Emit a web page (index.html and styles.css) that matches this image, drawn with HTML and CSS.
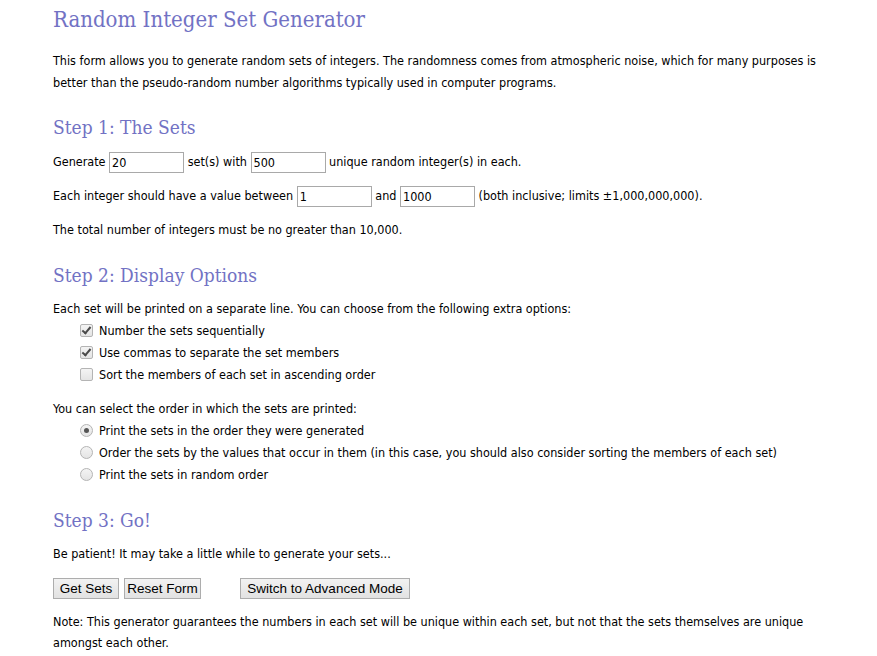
FILE: index.html
```html
<!DOCTYPE html>
<html>
<head>
<meta charset="utf-8">
<link rel="stylesheet" href="styles.css">
</head>
<body>
<div class="page">
<h1>Random Integer Set Generator</h1>
<p class="intro">This form allows you to generate random sets of integers. The randomness comes from atmospheric noise, which for many purposes is better than the pseudo-random number algorithms typically used in computer programs.</p>

<h2 class="h-step1">Step 1: The Sets</h2>
<p class="row">Generate <input class="num" type="text" value="20"> set(s) with <input class="num" type="text" value="500"> unique random integer(s) in each.</p>
<p class="row">Each integer should have a value between <input class="num" type="text" value="1"> and <input class="num" type="text" value="1000"> (both inclusive; limits ±1,000,000,000).</p>
<p class="row plain">The total number of integers must be no greater than 10,000.</p>

<h2 class="h-step2">Step 2: Display Options</h2>
<p class="lead">Each set will be printed on a separate line. You can choose from the following extra options:</p>
<div class="opts">
  <label class="opt"><input class="cb" type="checkbox" checked><span>Number the sets sequentially</span></label>
  <label class="opt"><input class="cb" type="checkbox" checked><span>Use commas to separate the set members</span></label>
  <label class="opt"><input class="cb" type="checkbox"><span>Sort the members of each set in ascending order</span></label>
</div>
<p class="lead second">You can select the order in which the sets are printed:</p>
<div class="opts">
  <label class="opt"><input class="rb" type="radio" name="order" checked><span>Print the sets in the order they were generated</span></label>
  <label class="opt"><input class="rb" type="radio" name="order"><span>Order the sets by the values that occur in them (in this case, you should also consider sorting the members of each set)</span></label>
  <label class="opt"><input class="rb" type="radio" name="order"><span>Print the sets in random order</span></label>
</div>

<h2 class="h-step3">Step 3: Go!</h2>
<p class="lead patient">Be patient! It may take a little while to generate your sets...</p>
<div class="buttons">
  <button class="btn btn-get">Get Sets</button>
  <button class="btn btn-reset">Reset Form</button>
  <button class="btn btn-adv">Switch to Advanced Mode</button>
</div>
<p class="note">Note: This generator guarantees the numbers in each set will be unique within each set, but not that the sets themselves are unique amongst each other.</p>
</div>
</body>
</html>
```
FILE: styles.css
```css
html, body {
  margin: 0;
  padding: 0;
  background: #fff;
}
body {
  font-family: "DejaVu Sans Condensed", "DejaVu Sans", Verdana, sans-serif;
  font-stretch: condensed;
  font-size: 12.5px;
  color: #000;
}
.page {
  padding: 0 40px 0 53px;
}
h1, h2 {
  font-family: "DejaVu Serif Condensed", "DejaVu Serif", Georgia, serif;
  font-stretch: condensed;
  font-weight: normal;
  color: #7272c4;
  margin: 0;
}
h1 {
  font-size: 22px;
  line-height: 28px;
  margin-top: 6px;
}
h2 {
  font-size: 19px;
  line-height: 24px;
}
.intro {
  line-height: 22px;
  margin: 16px 0 0 0;
}
.h-step1 { margin-top: 21px; }
.h-step2 { margin-top: 22px; }
.h-step3 { margin-top: 23px; }
.row {
  margin: 12px 0 0 0;
  line-height: 22px;
  display: flex;
  align-items: center;
  white-space: pre;
}
.num {
  width: 75px;
  height: 21px;
  box-sizing: border-box;
  border: 1px solid #a9a9a9;
  padding: 1px 2px;
  font-family: "DejaVu Sans Condensed", "DejaVu Sans", Verdana, sans-serif;
  font-stretch: condensed;
  font-size: 12.5px;
  margin: 0;
  outline: none;
}
.lead {
  margin: 11px 0 0 0;
  line-height: 22px;
}
.lead.second { margin-top: 13px; }
.lead.patient { margin-top: 11px; }
.opts {
  display: flex;
  flex-direction: column;
  padding-left: 27px;
  margin-top: -1px;
}
.opt {
  display: flex;
  align-items: center;
  height: 22px;
}
.cb, .rb {
  appearance: none;
  -webkit-appearance: none;
  width: 13px;
  height: 13px;
  margin: 0 6px 0 0;
  box-sizing: border-box;
  border: 1px solid #b4b4b4;
  background: linear-gradient(#f4f4f4, #e4e4e4);
  position: relative;
  flex: none;
}
.cb {
  border-radius: 2px;
}
.cb:checked::after {
  content: "";
  position: absolute;
  left: 3px;
  top: 0px;
  width: 3px;
  height: 7px;
  border: solid #4a4a4a;
  border-width: 0 2px 2px 0;
  transform: rotate(40deg);
}
.rb {
  border-radius: 50%;
}
.rb:checked::after {
  content: "";
  position: absolute;
  left: 3px;
  top: 3px;
  width: 5px;
  height: 5px;
  border-radius: 50%;
  background: #555;
}
.buttons {
  display: flex;
  gap: 5px;
  margin-top: 13px;
}
.btn {
  font-family: "Liberation Sans", Arial, sans-serif;
  font-size: 13.5px;
  height: 21px;
  padding: 0;
  border: 1px solid #adadad;
  border-radius: 0;
  background: linear-gradient(#f2f2f2, #e2e2e2);
  color: #000;
  text-align: center;
}
.btn-get { width: 66px; }
.btn-reset { width: 77px; }
.btn-adv { width: 170px; margin-left: 34px; }
.note {
  margin: 12px 0 0 0;
  line-height: 21px;
}
```
